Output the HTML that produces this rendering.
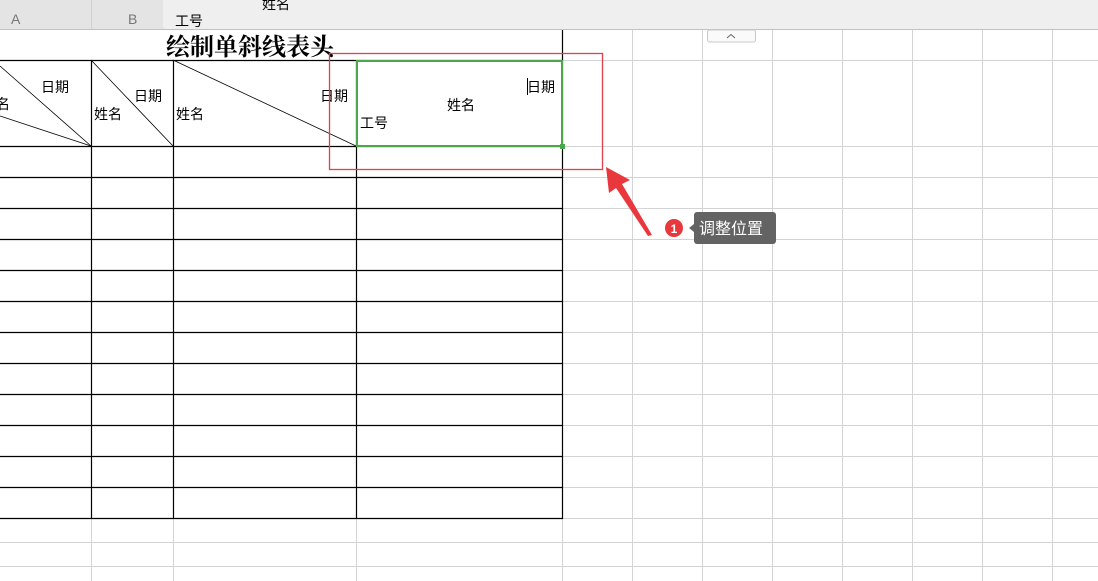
<!DOCTYPE html><html><head><meta charset="utf-8"><style>
body{margin:0;width:1098px;height:581px;overflow:hidden;background:#fff;font-family:"Liberation Sans","Noto Sans CJK SC",sans-serif;}
svg{display:block}
</style></head><body>
<svg width="1098" height="581" xmlns="http://www.w3.org/2000/svg" font-family="Liberation Sans, Noto Sans CJK SC, sans-serif">
<g stroke="#d4d4d4" stroke-width="1">
<line x1="91.5" y1="30" x2="91.5" y2="581"/><line x1="173.5" y1="30" x2="173.5" y2="581"/><line x1="356.5" y1="30" x2="356.5" y2="581"/><line x1="562.5" y1="30" x2="562.5" y2="581"/>
<line x1="632.5" y1="30" x2="632.5" y2="581"/><line x1="702.5" y1="30" x2="702.5" y2="581"/><line x1="772.5" y1="30" x2="772.5" y2="581"/><line x1="842.5" y1="30" x2="842.5" y2="581"/><line x1="912.5" y1="30" x2="912.5" y2="581"/><line x1="982.5" y1="30" x2="982.5" y2="581"/><line x1="1052.5" y1="30" x2="1052.5" y2="581"/>
<line x1="562" y1="60.5" x2="1098" y2="60.5"/>
<line x1="0" y1="542.5" x2="1098" y2="542.5"/><line x1="0" y1="566.5" x2="1098" y2="566.5"/>
<line x1="562" y1="146.5" x2="1098" y2="146.5"/><line x1="562" y1="177.5" x2="1098" y2="177.5"/><line x1="562" y1="208.5" x2="1098" y2="208.5"/><line x1="562" y1="239.5" x2="1098" y2="239.5"/><line x1="562" y1="270.5" x2="1098" y2="270.5"/><line x1="562" y1="301.5" x2="1098" y2="301.5"/><line x1="562" y1="332.5" x2="1098" y2="332.5"/><line x1="562" y1="363.5" x2="1098" y2="363.5"/><line x1="562" y1="394.5" x2="1098" y2="394.5"/><line x1="562" y1="425.5" x2="1098" y2="425.5"/><line x1="562" y1="456.5" x2="1098" y2="456.5"/><line x1="562" y1="487.5" x2="1098" y2="487.5"/><line x1="562" y1="518.5" x2="1098" y2="518.5"/>
</g>
<rect x="0" y="30" width="562" height="30" fill="#fff"/>
<g stroke="#000" stroke-width="1.2">
<line x1="0" y1="60.5" x2="563" y2="60.5"/>
<line x1="0" y1="146.5" x2="563" y2="146.5"/><line x1="0" y1="177.5" x2="563" y2="177.5"/><line x1="0" y1="208.5" x2="563" y2="208.5"/><line x1="0" y1="239.5" x2="563" y2="239.5"/><line x1="0" y1="270.5" x2="563" y2="270.5"/><line x1="0" y1="301.5" x2="563" y2="301.5"/><line x1="0" y1="332.5" x2="563" y2="332.5"/><line x1="0" y1="363.5" x2="563" y2="363.5"/><line x1="0" y1="394.5" x2="563" y2="394.5"/><line x1="0" y1="425.5" x2="563" y2="425.5"/><line x1="0" y1="456.5" x2="563" y2="456.5"/><line x1="0" y1="487.5" x2="563" y2="487.5"/><line x1="0" y1="518.5" x2="563" y2="518.5"/>
<line x1="91.5" y1="60" x2="91.5" y2="519"/><line x1="173.5" y1="60" x2="173.5" y2="519"/><line x1="356.5" y1="60" x2="356.5" y2="519"/><line x1="562.5" y1="30" x2="562.5" y2="519"/>
</g>
<g stroke="#000" stroke-width="0.8">
<line x1="0" y1="66" x2="91" y2="146"/><line x1="0" y1="116" x2="91" y2="146"/>
<line x1="91" y1="60" x2="173" y2="146"/><line x1="173" y1="60" x2="356" y2="146"/>
</g>
<g font-size="14" fill="#000">
<text x="-4" y="109">名</text><text x="41" y="92">日期</text>
<text x="94" y="119">姓名</text><text x="134" y="101">日期</text>
<text x="176" y="119">姓名</text><text x="320" y="101">日期</text>
<text x="360" y="128">工号</text><text x="447" y="110">姓名</text><text x="527" y="92">日期</text>
</g>
<line x1="527.5" y1="78" x2="527.5" y2="95" stroke="#000"/>
<text x="166" y="55" font-size="24" font-weight="bold" font-family="Liberation Serif, Noto Serif CJK SC, serif" fill="#000">绘制单斜线表头</text>
<rect x="357" y="61" width="205" height="85" fill="none" stroke="#4ca64c" stroke-width="2"/>
<rect x="560" y="144" width="5" height="5" fill="#4ca64c"/>
<rect x="329.5" y="53.5" width="273" height="116" fill="none" stroke="#e0404a" stroke-width="1.3"/>
<rect x="0" y="0" width="1098" height="30" fill="#e4e4e4"/>
<path d="M163 0 V26 Q163 29 167 29 H1098 V0 Z" fill="#efefef"/>
<line x1="0" y1="29.5" x2="1098" y2="29.5" stroke="#c2c2c2"/>
<line x1="91.5" y1="0" x2="91.5" y2="29" stroke="#d0d0d0"/>
<text x="11" y="24" font-size="14" fill="#777">A</text><text x="128" y="24" font-size="14" fill="#777">B</text>
<text x="262" y="9" font-size="14" fill="#000">姓名</text><text x="175" y="26" font-size="14" fill="#000">工号</text>
<rect x="707.5" y="30" width="48" height="12" rx="2" fill="#fafafa" stroke="#c8c8c8"/>
<path d="M727 38 L731 34.5 L735 38" fill="none" stroke="#666"/>
<path d="M606 167 L630 180 L622 184 L652 235 L648 236 L616 188 L609 193 Z" fill="#e8383d"/>
<circle cx="674" cy="228" r="9" fill="#e8383d"/>
<text x="674" y="233" font-size="12" font-weight="bold" fill="#fff" text-anchor="middle">1</text>
<rect x="694" y="212" width="82" height="32" rx="3" fill="#636363"/>
<path d="M694 224 L689 228 L694 232 Z" fill="#636363"/>
<text x="699" y="234" font-size="16" fill="#fff">调整位置</text>
</svg>
</body></html>
